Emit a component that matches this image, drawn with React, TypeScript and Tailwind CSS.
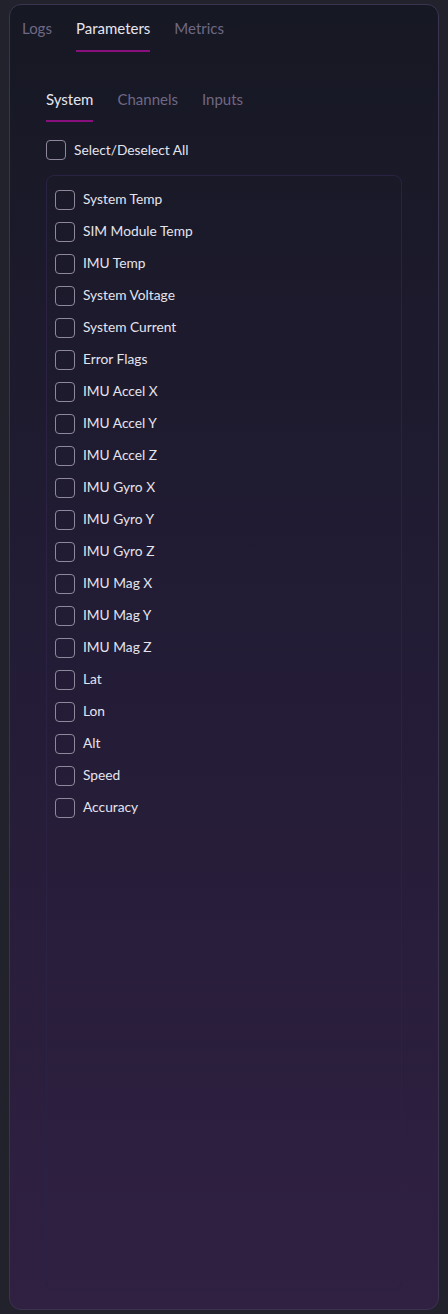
import { useState } from "react";

const PARAMS = [
  "System Temp",
  "SIM Module Temp",
  "IMU Temp",
  "System Voltage",
  "System Current",
  "Error Flags",
  "IMU Accel X",
  "IMU Accel Y",
  "IMU Accel Z",
  "IMU Gyro X",
  "IMU Gyro Y",
  "IMU Gyro Z",
  "IMU Mag X",
  "IMU Mag Y",
  "IMU Mag Z",
  "Lat",
  "Lon",
  "Alt",
  "Speed",
  "Accuracy",
];

function Box({ checked }: { checked: boolean }) {
  return (
    <span
      className={`w-5 h-5 shrink-0 rounded-[4px] border-[1.5px] ${
        checked ? "bg-[#8b1482] border-[#8b1482]" : "border-[#8f889c]"
      }`}
    />
  );
}

export default function App() {
  const [sel, setSel] = useState<string[]>([]);
  const toggle = (p: string) =>
    setSel((s) => (s.includes(p) ? s.filter((x) => x !== p) : [...s, p]));

  return (
    <div
      className="w-[448px] h-[1314px] bg-[#21222c] px-[9px] py-[4px] flex"
      style={{ fontFamily: "Lato, 'Noto Sans', sans-serif" }}
    >
      <div className="flex-1 flex flex-col rounded-[12px] border border-[#3b3350] bg-gradient-to-b from-[#161823] via-[#231c36] to-[#302042] pb-[19px]">
        {/* top tabs */}
        <div className="flex gap-6 pl-[12px] pt-[12px] text-[15px]">
          <div className="pb-[12px] text-[#6f6884]">Logs</div>
          <div className="pb-[10px] text-[#e6e6f0] border-b-2 border-[#8a0f7e]">Parameters</div>
          <div className="pb-[12px] text-[#6f6884]">Metrics</div>
        </div>

        <div className="flex-1 flex flex-col pl-[36px] pr-[36px] pt-[36px]">
          {/* sub tabs */}
          <div className="flex gap-6 text-[15px]">
            <div className="pb-[10px] text-[#e6e6f0] border-b-2 border-[#8a0f7e]">System</div>
            <div className="pb-[12px] text-[#6f6884]">Channels</div>
            <div className="pb-[12px] text-[#6f6884]">Inputs</div>
          </div>

          <label className="flex items-center gap-2 mt-[18px] text-[13.75px] text-[#e4e4ee]">
            <Box checked={sel.length === PARAMS.length} />
            <span>Select/Deselect All</span>
          </label>

          <div className="flex-1 mt-[14px] rounded-[8px] border border-[#2b2142] p-2">
            {PARAMS.map((p) => (
              <div
                key={p}
                onClick={() => toggle(p)}
                className="h-8 flex items-center gap-2 text-[13.75px] text-[#e4e4ee] cursor-pointer"
              >
                <Box checked={sel.includes(p)} />
                <span>{p}</span>
              </div>
            ))}
          </div>
        </div>
      </div>
    </div>
  );
}
